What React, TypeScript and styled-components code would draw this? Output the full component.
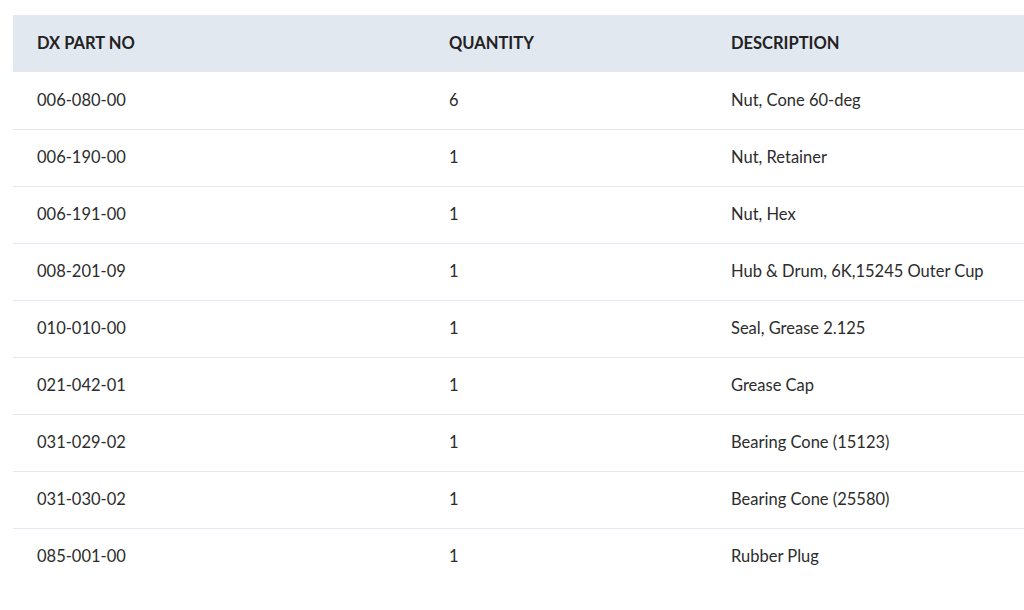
import React from "react";
import styled, { createGlobalStyle } from "styled-components";

const GlobalStyle = createGlobalStyle`
  html, body {
    margin: 0;
    padding: 0;
    background: #fff;
    overflow: hidden;
  }
  body {
    font-family: Lato, "Open Sans", sans-serif;
    color: #2c2c2c;
  }
`;

const Page = styled.div`
  padding: 15px 0 0 13px;
  width: 1040px;
`;

const Table = styled.table`
  width: 100%;
  border-collapse: collapse;
  table-layout: fixed;
`;

const HeadCell = styled.th<{ $w?: number }>`
  width: ${(p) => (p.$w ? `${p.$w}px` : "auto")};
  background: #e2e8f0;
  height: 57px;
  padding: 0 24px 1px;
  text-align: left;
  font-size: 16.5px;
  font-weight: 700;
  text-transform: uppercase;
  color: #222;
  box-sizing: border-box;
`;

const Row = styled.tr`
  border-bottom: 1px solid #e2e8f0;

  &:last-child {
    border-bottom: none;
  }
`;

const Cell = styled.td`
  height: 57px;
  padding: 0 24px 1px;
  font-size: 16.5px;
  color: #2c2c2c;
  box-sizing: border-box;
`;

const parts = [
  { no: "006-080-00", qty: 6, desc: "Nut, Cone 60-deg" },
  { no: "006-190-00", qty: 1, desc: "Nut, Retainer" },
  { no: "006-191-00", qty: 1, desc: "Nut, Hex" },
  { no: "008-201-09", qty: 1, desc: "Hub & Drum, 6K,15245 Outer Cup" },
  { no: "010-010-00", qty: 1, desc: "Seal, Grease 2.125" },
  { no: "021-042-01", qty: 1, desc: "Grease Cap" },
  { no: "031-029-02", qty: 1, desc: "Bearing Cone (15123)" },
  { no: "031-030-02", qty: 1, desc: "Bearing Cone (25580)" },
  { no: "085-001-00", qty: 1, desc: "Rubber Plug" },
];

const App = () => {
  return (
    <>
      <GlobalStyle />
      <Page>
        <Table>
          <thead>
            <tr>
              <HeadCell $w={412}>DX Part No</HeadCell>
              <HeadCell $w={282}>Quantity</HeadCell>
              <HeadCell>Description</HeadCell>
            </tr>
          </thead>
          <tbody>
            {parts.map((item) => (
              <Row key={item.no}>
                <Cell>{item.no}</Cell>
                <Cell>{item.qty}</Cell>
                <Cell>{item.desc}</Cell>
              </Row>
            ))}
          </tbody>
        </Table>
      </Page>
    </>
  );
};

export default App;
